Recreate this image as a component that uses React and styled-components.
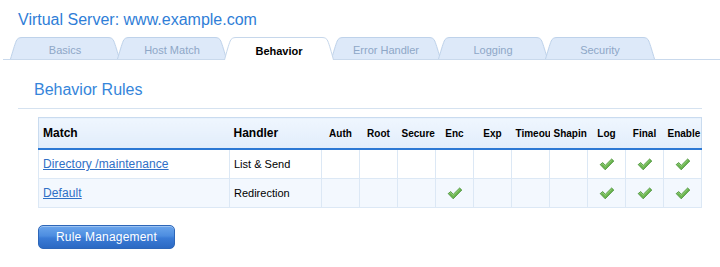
import React from "react";
import styled, { createGlobalStyle } from "styled-components";

const Global = createGlobalStyle`
  html, body { margin: 0; padding: 0; background: #ffffff; }
  body { font-family: "Liberation Sans", Arial, sans-serif; }
`;

const Page = styled.div`
  width: 720px;
  height: 267px;
  overflow: hidden;
  background: #fff;
`;

const Title = styled.h1`
  margin: 11px 0 0 18px;
  font-size: 16px;
  line-height: 18px;
  font-weight: normal;
  color: #2f7ed7;
`;

const TabBar = styled.div`
  display: flex;
  align-items: flex-start;
  height: 22px;
  margin: 8px 0 0 3px;
  padding-left: 7px;
  border-bottom: 1px solid #c9d9ec;
`;

const TabItem = styled.div`
  position: relative;
  flex: none;
  width: 110px;
  height: ${(p) => (p.$active ? 23 : 22)}px;
  margin-left: ${(p) => (p.$first ? 0 : -3)}px;
  z-index: ${(p) => (p.$active ? 5 : 1)};
  display: flex;
  align-items: center;
  justify-content: center;
  box-sizing: border-box;
  padding-top: ${(p) => (p.$active ? 4 : 3)}px;
  font-size: 11px;
  font-weight: ${(p) => (p.$active ? "bold" : "normal")};
  color: ${(p) => (p.$active ? "#000" : "#8ea7c7")};
`;

const TabShape = styled.svg`
  position: absolute;
  left: 0;
  top: 0;
  width: 110px;
  height: 100%;
  overflow: visible;
`;

const TabLabel = styled.span`
  position: relative;
`;

const Section = styled.div`
  margin: 21px 18px 0 18px;
`;

const SectionTitle = styled.h2`
  margin: 0;
  padding: 0 0 9px 16px;
  font-size: 16px;
  line-height: 18px;
  font-weight: normal;
  color: #3585da;
  border-bottom: 1px solid #d5e2f0;
`;

const Table = styled.table`
  margin: 8px 0 0 20px;
  width: 664px;
  table-layout: fixed;
  border-collapse: collapse;
  border: 1px solid #c9dbef;
`;

const Col = styled.col`
  width: ${(p) => p.$w}px;
`;

const HeadCell = styled.th`
  height: 30px;
  padding: ${(p) => (p.$wide ? "0 0 0 4px" : "0 4px")};
  background: linear-gradient(#eff6fe, #e1edfb);
  border-bottom: 2px solid #2b78d4;
  text-align: ${(p) => (p.$wide ? "left" : "center")};
  font-size: ${(p) => (p.$wide ? 12 : 10)}px;
  font-weight: bold;
  color: #000;
  white-space: nowrap;
  overflow: hidden;
  vertical-align: middle;
`;

const Row = styled.tr`
  background: ${(p) => (p.$alt ? "#f3f8fe" : "#ffffff")};
`;

const Cell = styled.td`
  height: 28px;
  padding: ${(p) => (p.$center ? "0" : "0 0 0 4px")};
  border: 1px solid #dce8f5;
  font-size: 11px;
  color: #000;
  text-align: ${(p) => (p.$center ? "center" : "left")};
  vertical-align: middle;
  white-space: nowrap;
  overflow: hidden;
`;

const RuleLink = styled.a`
  font-size: 12px;
  letter-spacing: 0.1px;
  color: #2f6fc6;
  text-decoration: underline;
  cursor: pointer;
`;

const Button = styled.button`
  display: block;
  margin: 17px 0 0 20px;
  width: 137px;
  height: 24px;
  padding: 0;
  border: 1px solid #2d66b8;
  border-radius: 5px;
  background: linear-gradient(#6aa5ec 0%, #4d8de0 45%, #3a7bd6 55%, #2b69c3 100%);
  color: #fff;
  font-family: "Liberation Sans", Arial, sans-serif;
  font-size: 12px;
  letter-spacing: 0.2px;
  cursor: pointer;
  box-shadow: inset 0 1px 0 rgba(255, 255, 255, 0.35);
`;

const CheckSvg = styled.svg`
  display: block;
  margin: 0 auto;
  width: 16px;
  height: 13px;
`;

function Check() {
  return (
    <CheckSvg viewBox="0 0 16 13">
      <path
        d="M1.2 6.6 L3.8 4.6 L6.2 7.4 L12.6 1 L14.8 3 L6.2 11.8 Z"
        fill="#6cb650"
        stroke="#3f8a2e"
        strokeWidth="0.8"
        strokeLinejoin="round"
      />
      <path d="M2.4 6.6 L3.8 5.6 L6.2 8.4 L12.6 2.1" fill="none" stroke="#9fd685" strokeWidth="0.8" />
    </CheckSvg>
  );
}

function Tab({ label, active, first }) {
  const h = active ? 23 : 22;
  const top = `M0.5,${h} C2.6,15 4.6,8 6.2,4 C7.3,1.6 8.8,0.5 12,0.5 L98,0.5 C101.2,0.5 102.7,1.6 103.8,4 C105.4,8 107.4,15 109.5,${h}`;
  return (
    <TabItem $active={active} $first={first}>
      <TabShape viewBox={`0 0 110 ${h}`} preserveAspectRatio="none">
        <path d={`${top} Z`} fill={active ? "#ffffff" : "#dde9f9"} />
        <path d={top} fill="none" stroke={active ? "#c6d7eb" : "#bed2ea"} strokeWidth="1" />
      </TabShape>
      <TabLabel>{label}</TabLabel>
    </TabItem>
  );
}

const tabs = ["Basics", "Host Match", "Behavior", "Error Handler", "Logging", "Security"];
const flagCols = [
  { key: "auth", label: "Auth" },
  { key: "root", label: "Root" },
  { key: "secure", label: "Secure" },
  { key: "enc", label: "Enc" },
  { key: "exp", label: "Exp" },
  { key: "timeout", label: "Timeou" },
  { key: "shaping", label: "Shapin" },
  { key: "log", label: "Log" },
  { key: "final", label: "Final" },
  { key: "enabled", label: "Enable" },
];

const rules = [
  { match: "Directory /maintenance", handler: "List & Send", flags: ["log", "final", "enabled"] },
  { match: "Default", handler: "Redirection", flags: ["enc", "log", "final", "enabled"] },
];

export default function App() {
  return (
    <Page>
      <Global />
      <Title>Virtual Server: www.example.com</Title>
      <TabBar>
        {tabs.map((t, i) => (
          <Tab key={t} label={t} active={t === "Behavior"} first={i === 0} />
        ))}
      </TabBar>
      <Section>
        <SectionTitle>Behavior Rules</SectionTitle>
        <Table>
          <colgroup>
            <Col $w={191} />
            <Col $w={92} />
            {flagCols.map((c) => (
              <Col key={c.key} $w={38} />
            ))}
          </colgroup>
          <thead>
            <tr>
              <HeadCell $wide>Match</HeadCell>
              <HeadCell $wide>Handler</HeadCell>
              {flagCols.map((c) => (
                <HeadCell key={c.key}>{c.label}</HeadCell>
              ))}
            </tr>
          </thead>
          <tbody>
            {rules.map((r, i) => (
              <Row key={r.match} $alt={i % 2 === 1}>
                <Cell>
                  <RuleLink>{r.match}</RuleLink>
                </Cell>
                <Cell>{r.handler}</Cell>
                {flagCols.map((c) => (
                  <Cell key={c.key} $center>
                    {r.flags.includes(c.key) ? <Check /> : null}
                  </Cell>
                ))}
              </Row>
            ))}
          </tbody>
        </Table>
        <Button>Rule Management</Button>
      </Section>
    </Page>
  );
}
